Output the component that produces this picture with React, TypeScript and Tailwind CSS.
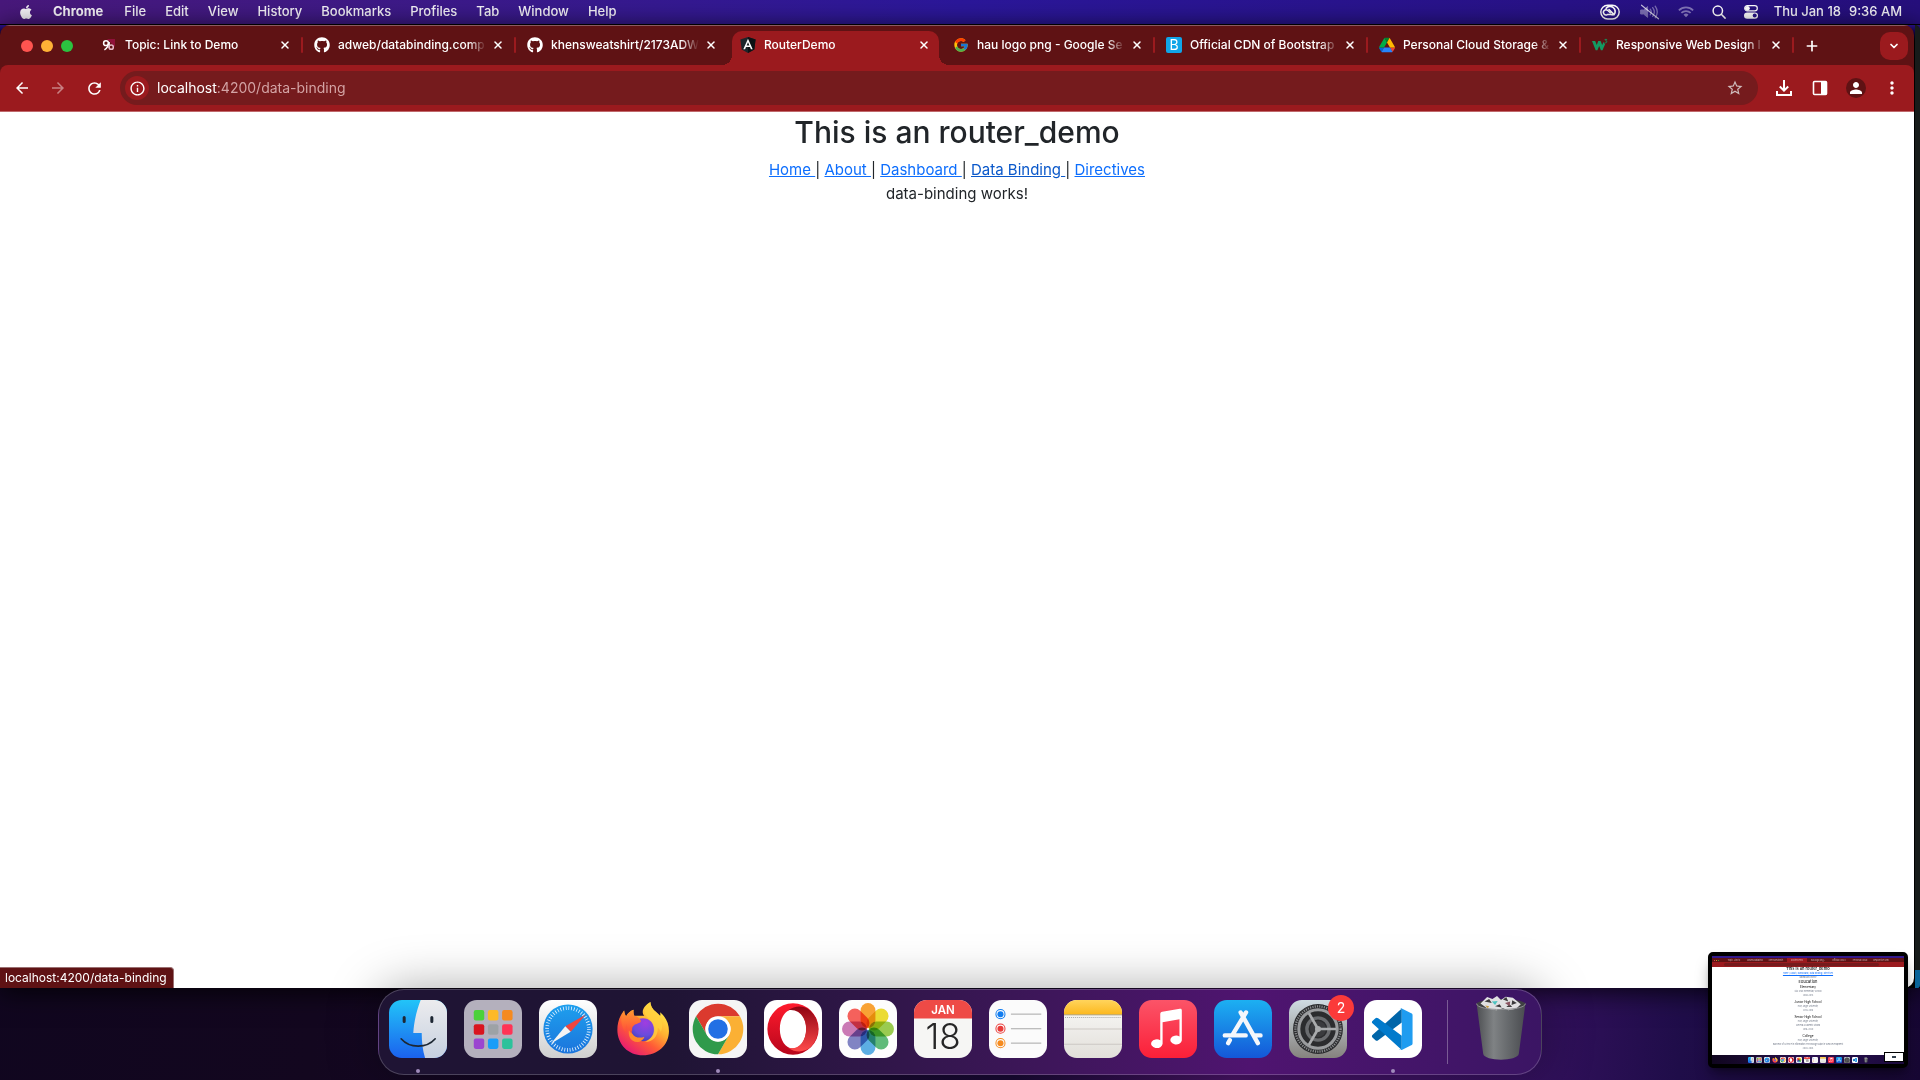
import type { ReactNode } from "react";
import { ChevronDown, Plus, X } from "lucide-react";
import { FaApple, FaGithub } from "react-icons/fa";
import { FcGoogle } from "react-icons/fc";
import {
  MdArrowBack,
  MdArrowForward,
  MdInfoOutline,
  MdMoreVert,
  MdPerson,
  MdRefresh,
  MdStarBorder,
} from "react-icons/md";

/* ---------- menu bar ---------- */

const menus = ["File", "Edit", "View", "History", "Bookmarks", "Profiles", "Tab", "Window", "Help"];

function CreativeCloudIcon() {
  return (
    <svg viewBox="0 0 20 16" className="h-4 w-5" fill="none" stroke="#fff">
      <rect x="0.8" y="1.2" width="18.4" height="13.8" rx="6.9" strokeWidth="1.4" />
      <path d="M10.3 8.8 7.6 6.3a2.6 2.6 0 1 0-.2 4.3h4.8" strokeWidth="1.5" strokeLinecap="round" />
      <path d="M6.2 4.3a4.8 4.8 0 0 1 6.8-.9 4.8 4.8 0 0 1 1 7.2h-2" strokeWidth="1.7" strokeLinecap="round" />
      <path d="m9 5.5 4.6 4.6" strokeWidth="1.6" strokeLinecap="round" />
    </svg>
  );
}

function MutedIcon() {
  return (
    <svg viewBox="0 0 20 16" className="h-4 w-5" fill="none" stroke="#fff" strokeLinecap="round">
      <g opacity="0.4">
        <path d="M1 6h2.6L7.6 2.6v10.8L3.6 10H1z" fill="#fff" />
        <path d="M10.2 5.2a4.6 4.6 0 0 1 0 5.6M12.7 3.6a7.4 7.4 0 0 1 0 8.8M15.2 2.2a10 10 0 0 1 0 11.6" strokeWidth="1.3" />
      </g>
      <path d="M1.5 1.2 18.5 14.8" strokeWidth="1.1" opacity="0.75" />
    </svg>
  );
}

function WifiIcon() {
  return (
    <svg viewBox="0 0 18 14" className="h-4 w-4" fill="none" stroke="#fff" strokeWidth="2" opacity="0.4">
      <path d="M1 5.2a11.4 11.4 0 0 1 16 0M3.8 8a7.5 7.5 0 0 1 10.4 0" />
      <path d="M6.2 10.2a4 4 0 0 1 5.6 0L9 13z" fill="#fff" stroke="none" />
    </svg>
  );
}

function SearchIcon() {
  return (
    <svg viewBox="0 0 14 14" className="size-[14px]" fill="none" stroke="#fff" strokeWidth="1.5" strokeLinecap="round">
      <circle cx="5.8" cy="5.8" r="4.7" />
      <path d="m9.3 9.3 3.8 3.8" />
    </svg>
  );
}

function ControlCenterIcon() {
  return (
    <svg viewBox="0 0 14 14" className="size-[14px]">
      <rect x="0.7" y="0.7" width="12.6" height="5.2" rx="2.6" fill="none" stroke="#fff" strokeWidth="1.2" />
      <circle cx="3.4" cy="3.3" r="2.4" fill="#fff" />
      <rect x="0" y="7.4" width="14" height="6.4" rx="3.2" fill="#fff" />
      <circle cx="10.7" cy="10.6" r="2" fill="#281487" />
    </svg>
  );
}

function MenuBar() {
  return (
    <header className="flex h-6 shrink-0 items-center bg-linear-to-r from-[#48187b] via-[#2b179a] to-[#260f7c] pr-[18px] pl-[18px] text-[13px] font-medium text-white/95">
      <button aria-label="Apple menu" className="w-[35px] shrink-0">
        <FaApple className="size-4" />
      </button>
      <nav className="flex gap-[19px]">
        <button className="mr-0.5 font-bold">Chrome</button>
        {menus.map((m) => (
          <button key={m}>{m}</button>
        ))}
      </nav>
      <div className="ml-auto flex items-center">
        <button aria-label="Creative Cloud" className="mr-5"><CreativeCloudIcon /></button>
        <button aria-label="Sound muted" className="mr-[18px]"><MutedIcon /></button>
        <button aria-label="Wi-Fi" className="mr-[18px]"><WifiIcon /></button>
        <button aria-label="Spotlight" className="mr-[18px]"><SearchIcon /></button>
        <button aria-label="Control Center" className="mr-4"><ControlCenterIcon /></button>
        <time className="flex gap-2"><span>Thu Jan 18</span><span>9:36 AM</span></time>
      </div>
    </header>
  );
}

/* ---------- favicons ---------- */

function LinkedRingsIcon() {
  return (
    <svg viewBox="0 0 16 16" className="size-4" fill="none">
      <path d="M6 2h8v8z" fill="#8f1139" />
      <circle cx="5" cy="6.2" r="2.4" stroke="#fff" strokeWidth="1.5" />
      <path d="M7.4 6.2c0 3-1.4 5-4 6.6" stroke="#fff" strokeWidth="1.5" />
      <path d="M8.2 5v6" stroke="#fff" strokeWidth="1.4" />
      <circle cx="10.2" cy="10.2" r="2.1" stroke="#e7b9c8" strokeWidth="1.5" />
    </svg>
  );
}

function AngularIcon() {
  return (
    <svg viewBox="0 0 16 16" className="size-4">
      <path d="M8 0 15.6 2.6 14.3 12.4 8 16 1.7 12.4.4 2.6z" fill="#1c262b" />
      <path d="M8 0 15.6 2.6 14.3 12.4 8 16z" fill="#0d1214" />
      <path d="M8 1.8 3.3 12.2h1.8l.9-2.3h4l.9 2.3h1.8zM8 5.2l1.4 3.3H6.6z" fill="#fff" fillRule="evenodd" />
    </svg>
  );
}

function BootstrapCdnIcon() {
  return (
    <span className="grid size-4 place-items-center rounded-[2px] bg-[#10a5e8] text-sm leading-none font-normal text-white">B</span>
  );
}

function DriveIcon() {
  return (
    <svg viewBox="0 0 87.3 78" className="size-4">
      <path d="m6.6 66.85 3.85 6.65c.8 1.4 1.95 2.5 3.3 3.3L27.5 53H0c0 1.55.4 3.1 1.2 4.5z" fill="#0066da" />
      <path d="M43.65 25 29.9 1.2c-1.35.8-2.5 1.9-3.3 3.3l-25.4 44A9.06 9.06 0 0 0 0 53h27.5z" fill="#00ac47" />
      <path d="M73.55 76.8c1.35-.8 2.5-1.9 3.3-3.3l1.6-2.75L86.1 57.5c.8-1.4 1.2-2.95 1.2-4.5H59.8l5.85 11.5z" fill="#ea4335" />
      <path d="M43.65 25 57.4 1.2C56.05.4 54.5 0 52.9 0H34.4c-1.6 0-3.15.45-4.5 1.2z" fill="#00832d" />
      <path d="M59.8 53H27.5L13.75 76.8c1.35.8 2.9 1.2 4.5 1.2h50.8c1.6 0 3.15-.45 4.5-1.2z" fill="#2684fc" />
      <path d="m73.4 26.5-12.7-22c-.8-1.4-1.95-2.5-3.3-3.3L43.65 25 59.8 53h27.45c0-1.55-.4-3.1-1.2-4.5z" fill="#ffba00" />
    </svg>
  );
}

function W3Icon() {
  return (
    <svg viewBox="0 0 16 16" className="size-4">
      <path d="M0 4h3.2l1.6 4L6.2 4h2.4l1.6 4 1.3-3 1.6 2.2-2.6 6H8.9L7.2 9l-1.8 4.2H3.7z" fill="#149a62" />
      <path d="M12.6 2.4h2.2l-1.1 1.5c1.8 0 1.6 2.3-1 1.9" fill="none" stroke="#149a62" strokeWidth="0.9" />
    </svg>
  );
}

/* ---------- browser ---------- */

type TabData = { title: string; icon: ReactNode; active?: boolean; divider?: boolean };

const tabs: TabData[] = [
  { title: "Topic: Link to Demo", icon: <LinkedRingsIcon />, divider: true },
  { title: "adweb/databinding.comp", icon: <FaGithub className="size-4" />, divider: true },
  { title: "khensweatshirt/2173ADW", icon: <FaGithub className="size-4" /> },
  { title: "RouterDemo", icon: <AngularIcon />, active: true },
  { title: "hau logo png - Google Se", icon: <FcGoogle className="size-4" />, divider: true },
  { title: "Official CDN of Bootstrap", icon: <BootstrapCdnIcon />, divider: true },
  { title: "Personal Cloud Storage &", icon: <DriveIcon />, divider: true },
  { title: "Responsive Web Design I", icon: <W3Icon />, divider: true },
];

function Tab({ tab }: { tab: TabData }) {
  return (
    <div
      role="tab"
      aria-selected={!!tab.active}
      className="relative flex h-[39px] w-[213px] min-w-0 shrink items-center pr-2.5 pb-px pl-[11px]"
    >
      {tab.active && (
        <>
          <div className="absolute inset-x-[3px] top-[5px] bottom-0 rounded-t-[10px] bg-[#9b1a1e]" />
          <div className="absolute bottom-0 -left-[7px] size-2.5 bg-[radial-gradient(circle_at_0_0,transparent_10px,#9b1a1e_10px)]" />
          <div className="absolute -right-[7px] bottom-0 size-2.5 bg-[radial-gradient(circle_at_100%_0,transparent_10px,#9b1a1e_10px)]" />
        </>
      )}
      {tab.divider && <div className="absolute right-0 h-4 w-0.5 rounded-full bg-[#9b1a1e]" />}
      <span className="relative size-4 shrink-0">{tab.icon}</span>
      <span className="relative ml-2 min-w-0 flex-1 overflow-hidden mask-r-from-88% text-xs font-medium whitespace-nowrap">
        {tab.title}
      </span>
      <button aria-label={`Close ${tab.title}`} className="relative ml-1 grid size-4 place-items-center">
        <X className="size-3" strokeWidth={3} />
      </button>
    </div>
  );
}

function TabStrip() {
  return (
    <div className="flex h-10 shrink-0 items-center border-t border-[#8a5a60] bg-[#5f1214] pr-1.5 pl-[21px] text-white">
      <div className="flex w-[69px] shrink-0 gap-2">
        <button aria-label="Close window" className="size-3 rounded-full bg-[#ff5450]" />
        <button aria-label="Minimize window" className="size-3 rounded-full bg-[#ffb136]" />
        <button aria-label="Zoom window" className="size-3 rounded-full bg-[#2cc140]" />
      </div>
      <div role="tablist" className="flex min-w-0">
        {tabs.map((t) => (
          <Tab key={t.title} tab={t} />
        ))}
      </div>
      <button aria-label="New tab" className="ml-2.5 grid size-4 shrink-0 place-items-center">
        <Plus className="size-4" strokeWidth={2.5} />
      </button>
      <button aria-label="Search tabs" className="ml-auto grid size-7 shrink-0 place-items-center rounded-[10px] bg-[#9b1a1e]">
        <ChevronDown className="size-3" strokeWidth={3.5} />
      </button>
    </div>
  );
}

const toolButton = "grid size-9 shrink-0 place-items-center";

function Toolbar() {
  return (
    <div className="shrink-0 bg-[#5f1214]">
      <div className="flex h-[47px] items-center rounded-t-lg border-b border-[#c0696c] bg-[#9b1a1e] px-1 text-white">
        <button aria-label="Back" className={toolButton}><MdArrowBack className="size-[18px]" /></button>
        <button aria-label="Forward" className={toolButton}><MdArrowForward className="size-[18px] opacity-45" /></button>
        <button aria-label="Reload" className={toolButton}><MdRefresh className="size-[19px]" /></button>
        <div className="mx-2 flex h-[34px] min-w-0 flex-1 items-center rounded-full bg-[#751b1d] pr-3.5 pl-[5px]">
          <button aria-label="Site information" className="grid size-6 shrink-0 place-items-center rounded-full bg-[#9b1a1e]">
            <MdInfoOutline className="size-[17px]" />
          </button>
          <div className="relative ml-2 flex-1 text-sm">
            <span aria-hidden="true" className="pointer-events-none absolute inset-y-0 left-0">
              <span>localhost</span>
              <span className="text-[#d3a3a4]">:4200/data-binding</span>
            </span>
            <input
              aria-label="Address and search bar"
              defaultValue="localhost:4200/data-binding"
              className="block w-full bg-transparent text-transparent outline-none"
            />
          </div>
          <button aria-label="Bookmark this tab"><MdStarBorder className="size-[18px] text-[#cfbcbc]" /></button>
        </div>
        <button aria-label="Downloads" className={toolButton}>
          <svg viewBox="0 0 16 16" className="size-4" fill="none" stroke="#fff" strokeWidth="2">
            <path d="M8 0v10.5M3.8 6.5 8 10.7l4.2-4.2M1 11v4h14v-4" />
          </svg>
        </button>
        <button aria-label="Side panel" className={toolButton}>
          <svg viewBox="0 0 16 16" className="size-4">
            <rect x="1.5" y="1.5" width="13" height="13" rx="1" fill="none" stroke="#fff" strokeWidth="1.6" />
            <path d="M9 1.5h5.5v13H9z" fill="#fff" />
          </svg>
        </button>
        <button aria-label="Profile" className={toolButton}>
          <span className="grid size-5 place-items-center rounded-full bg-[#5f1214]"><MdPerson className="size-[18px]" /></span>
        </button>
        <button aria-label="Customize and control" className={toolButton}><MdMoreVert className="size-5" /></button>
      </div>
    </div>
  );
}

const links = ["Home", "About", "Dashboard", "Data Binding", "Directives"];

function Page() {
  return (
    <main className="relative flex-1 bg-white text-center text-[#212529]">
      <h2 className="mb-1.5 text-[30px] leading-10 font-medium">This is an router_demo</h2>
      <nav className="text-[15px] leading-6">
        {links.map((l, i) => (
          <span key={l}>
            <a
              href="#"
              className={
                l === "Data Binding"
                  ? "whitespace-pre text-[#0a58ca] underline"
                  : "whitespace-pre text-[#0d6efd] underline"
              }
            >
              {i < links.length - 1 ? l + " " : l}
            </a>
            {i < links.length - 1 && "| "}
          </span>
        ))}
      </nav>
      <p className="text-[15px] leading-6">data-binding works!</p>
      <div className="absolute bottom-0 left-0 h-[21px] rounded-tr-[4px] border-t border-r border-[#9a7072] bg-[#5f1214] pr-1.5 pl-[5px] text-xs leading-5 text-white">
        localhost:4200/data-binding
      </div>
    </main>
  );
}

/* ---------- dock icons, all on a 172-unit square ---------- */

function Tile({ fill, children }: { fill: string; children?: ReactNode }) {
  return (
    <svg viewBox="0 0 172 172" className="block size-full overflow-visible">
      <rect width="172" height="172" rx="38" fill={fill} />
      {children}
    </svg>
  );
}

function Grad({ id, a, b, x2 = 0, y2 = 1 }: { id: string; a: string; b: string; x2?: number; y2?: number }) {
  return (
    <linearGradient id={id} x1="0" y1="0" x2={x2} y2={y2}>
      <stop stopColor={a} />
      <stop offset="1" stopColor={b} />
    </linearGradient>
  );
}

function Finder() {
  return (
    <Tile fill="url(#finderBlue)">
      <defs>
        <Grad id="finderBlue" a="#22c4f8" b="#1b62ee" />
        <Grad id="finderPale" a="#ececee" b="#c6d0e0" />
        <clipPath id="finderClip"><rect width="172" height="172" rx="38" /></clipPath>
      </defs>
      <path clipPath="url(#finderClip)" d="M94 0C82 30 74 65 72 98h25c0 27 3 52 10 74h65V0z" fill="url(#finderPale)" />
      <path d="M45 52v12M127 52v12" stroke="#1d2733" strokeWidth="9" strokeLinecap="round" />
      <path d="M36 115c25 29 76 29 101 0" fill="none" stroke="#1d2733" strokeWidth="5" strokeLinecap="round" />
    </Tile>
  );
}

const launchpadColors = ["#4bd13a", "#fdb927", "#f58a1f", "#d9141e", "#9da2a6", "#ff3355", "#9b45d0", "#1a9df8", "#2bc29b"];

function Launchpad() {
  return (
    <Tile fill="#b4b0bd">
      {launchpadColors.map((c, i) => (
        <rect key={c} x={29 + (i % 3) * 42} y={30 + Math.floor(i / 3) * 42} width="31" height="31" rx="6" fill={c} />
      ))}
    </Tile>
  );
}

function Safari() {
  return (
    <Tile fill="url(#safariTile)">
      <defs>
        <Grad id="safariTile" a="#ffffff" b="#cfcfcf" />
        <Grad id="safariDial" a="#1ea0ee" b="#1b74dc" />
      </defs>
      <circle cx="86" cy="86" r="73" fill="url(#safariDial)" />
      <circle cx="86" cy="86" r="62" fill="none" stroke="#e8f4ff" strokeWidth="11" strokeDasharray="2.4 5.7" />
      <path d="M139 43 78 78l16 16z" fill="#ee4540" />
      <path d="m35 130 43-52 16 16z" fill="#f4f4f4" />
    </Tile>
  );
}

function Firefox() {
  return (
    <svg viewBox="0 0 172 172" className="block size-full">
      <defs>
        <linearGradient id="foxBody" x1="0.85" y1="0.1" x2="0.2" y2="1">
          <stop stopColor="#fff04a" />
          <stop offset="0.35" stopColor="#ffb031" />
          <stop offset="0.62" stopColor="#ff5b36" />
          <stop offset="1" stopColor="#e3117c" />
        </linearGradient>
        <radialGradient id="foxGlobe" cx="0.6" cy="0.2" r="0.9">
          <stop stopColor="#a03de0" />
          <stop offset="0.6" stopColor="#6a4bdc" />
          <stop offset="1" stopColor="#3b3fae" />
        </radialGradient>
        <Grad id="foxHead" a="#ff9a2e" b="#ff4a3a" />
      </defs>
      <path
        d="M108 6c1 14 6 20 16 29 6 6 10 8 13 12 1-5 0-8 0-11 17 15 26 34 26 56 0 42-34 72-77 72-44 0-76-33-76-76 0-23 8-43 20-57 1 9 3 14 6 17 5-9 13-16 22-19-1 8 0 14 2 18h30c-12-12 0-32 18-41z"
        fill="url(#foxBody)"
      />
      <circle cx="86" cy="88" r="34" fill="url(#foxGlobe)" />
      <path d="M30 31c1 9 3 14 6 17 5-9 13-16 22-19-1 8 0 14 2 18 8 1 16 6 20 15 0 5-12 8-18 11-8 6-9 10-8 20-9-5-15-13-16-24-4 9-5 19-2 29-16-18-19-46-6-67z" fill="url(#foxHead)" />
      <path d="M108 6c1 14 6 20 16 29 18 16 24 38 15 60-2-7-5-10-9-13 0 27-15 42-38 42 20-10 28-23 26-42-3-20-18-26-26-40-3-13 3-27 16-36z" fill="#ffd23f" opacity="0.75" />
      <path d="M54 100c8 12 23 14 36 9-4 14-21 20-34 12-11-7-13-18-12-31 3 4 6 8 10 10z" fill="#ff8a2c" />
    </svg>
  );
}

const chromeSector = "M151 48.5H86a37.5 37.5 0 0 0-32.5 56.25L21 48.5a75 75 0 0 1 130 0z";

function ChromeIcon() {
  return (
    <Tile fill="#f5f5f5">
      <path d={chromeSector} fill="#db3a2e" />
      <path d={chromeSector} fill="#fbb034" transform="rotate(120 86 86)" />
      <path d={chromeSector} fill="#2f9a4b" transform="rotate(240 86 86)" />
      <circle cx="86" cy="86" r="37" fill="#fff" />
      <circle cx="86" cy="86" r="29" fill="#2270e4" />
    </Tile>
  );
}

function Opera() {
  return (
    <Tile fill="#fff">
      <defs>
        <Grad id="operaRing" a="#ff1b2d" b="#b8061c" />
        <Grad id="operaSide" a="#8f0312" b="#ff4b4b" />
      </defs>
      <path d="M86 10a76 76 0 1 0 0 152 76 76 0 0 0 0-152zm0 18c22 0 39 25 39 58s-17 58-39 58-39-25-39-58 17-58 39-58z" fill="url(#operaRing)" fillRule="evenodd" />
      <path d="M70 31c26-17 50-14 67 0a76 76 0 0 1 0 110c-17 14-43 16-65 1 28 8 53-18 53-56S99 24 70 31z" fill="url(#operaSide)" />
    </Tile>
  );
}

const petals = ["#f8981d", "#e9d71c", "#8fc63d", "#4fb36b", "#4aa5e0", "#7377bd", "#c56bad", "#f4504a"];

function Photos() {
  return (
    <Tile fill="#fdfdfd">
      <g className="isolate">
        {petals.map((c, i) => (
          <rect
            key={c}
            x="64"
            y="9"
            width="44"
            height="74"
            rx="22"
            fill={c}
            opacity="0.9"
            className="mix-blend-multiply"
            transform={`rotate(${i * 45} 86 86)`}
          />
        ))}
      </g>
    </Tile>
  );
}

function CalendarIcon() {
  return (
    <Tile fill="#f6f6f4">
      <path d="M0 55V38A38 38 0 0 1 38 0h96a38 38 0 0 1 38 38v17z" fill="#ee4a46" />
      <text x="86" y="42" textAnchor="middle" fontSize="34" fontWeight="600" fill="#fff">JAN</text>
      <text x="86" y="145" textAnchor="middle" fontSize="104" fontWeight="300" fill="#262626">18</text>
    </Tile>
  );
}

function Reminders() {
  return (
    <Tile fill="#fbfbfb">
      {["#127df0", "#ea3c39", "#f68b1f"].map((c, i) => (
        <g key={c} transform={`translate(0 ${i * 43})`}>
          <circle cx="34" cy="42" r="13.5" fill="none" stroke={c} strokeWidth="3" />
          <circle cx="34" cy="42" r="9" fill={c} />
          <path d="M65 42h90" stroke="#bdbdbd" strokeWidth="4" />
        </g>
      ))}
    </Tile>
  );
}

function Notes() {
  return (
    <Tile fill="url(#notesPaper)">
      <defs>
        <Grad id="notesPaper" a="#fafaf8" b="#e2dfda" />
        <Grad id="notesTop" a="#ffd45c" b="#fcb81e" />
      </defs>
      <path d="M0 43v-5A38 38 0 0 1 38 0h96a38 38 0 0 1 38 38v5z" fill="url(#notesTop)" />
      <path d="M0 44h172" stroke="#8f7a45" strokeWidth="2" />
      <path d="M3 52h166" stroke="#aaa" strokeWidth="3" strokeDasharray="3 3" />
      <path d="M0 86h172M0 131h172" stroke="#cbc8c4" strokeWidth="3" />
    </Tile>
  );
}

function Music() {
  return (
    <Tile fill="url(#musicTile)">
      <defs><Grad id="musicTile" a="#fb5468" b="#fb1f38" /></defs>
      <path d="M63 42c0-4 2-6 6-7l52-9c4-1 6 1 6 5v89a17 13 0 1 1-7-12V57l-50 9v64a17 13 0 1 1-7-11z" fill="#fff" />
    </Tile>
  );
}

function AppStore() {
  return (
    <Tile fill="url(#storeTile)">
      <defs><Grad id="storeTile" a="#1cb0f2" b="#1457d8" /></defs>
      <g stroke="#f4f7fb" strokeWidth="13" strokeLinecap="round">
        <path d="M95 37 57 100M47 119l-5 9M79 37l51 91M32 105h62M118 105h20" />
      </g>
    </Tile>
  );
}

function Settings() {
  return (
    <Tile fill="url(#settingsTile)">
      <defs><Grad id="settingsTile" a="#cfdbe2" b="#85827e" /></defs>
      <circle cx="86" cy="86" r="74" fill="#2b2c2e" />
      <circle cx="86" cy="86" r="67" fill="none" stroke="#8b8d8f" strokeWidth="7" strokeDasharray="3.4 3.5" />
      <circle cx="86" cy="86" r="57" fill="none" stroke="#9a9c9e" strokeWidth="9" />
      <circle cx="86" cy="86" r="33" fill="none" stroke="#6a6c6f" strokeWidth="10" />
      <circle cx="86" cy="86" r="24" fill="#3a3b3e" />
      <path d="M86 86h54M86 86 59 39M86 86l-27 47" stroke="#a9abad" strokeWidth="8" />
      <circle cx="86" cy="86" r="9" fill="#a9abad" />
    </Tile>
  );
}

function VSCode() {
  return (
    <Tile fill="#fff">
      <path d="M112 25v42L42 119c-3 2-6 2-8 0l-9-8c-2-2-2-5 0-7z" fill="#0065a9" />
      <path d="M112 148v-42L42 54c-3-2-6-2-8 0l-9 8c-2 2-2 5 0 7z" fill="#007acc" />
      <path d="m112 25 28 14c3 1 4 3 4 6v83c0 3-1 5-4 6l-28 14c-3 1-6 1-8-2 4 3 8 1 8-4V30c0-5-4-7-8-4 2-2 5-3 8-1z" fill="#1f9cf0" />
    </Tile>
  );
}

function Trash() {
  return (
    <svg viewBox="0 0 156 200" className="block size-full">
      <defs>
        <linearGradient id="trashBody">
          <stop stopColor="#4d4f52" />
          <stop offset="0.35" stopColor="#7f8284" />
          <stop offset="0.7" stopColor="#626568" />
          <stop offset="1" stopColor="#4a4c50" />
        </linearGradient>
      </defs>
      <ellipse cx="78" cy="28" rx="74" ry="16" fill="#3f4043" />
      <path d="M4 26c0 24 148 24 148 0l-20 152c-3 24-105 24-108 0z" fill="url(#trashBody)" />
      <path d="m16 26 20-20 16 6 14-9 12 12 14-10 22 3 24 20-14 14-24 4-16-6-20 6-26-4z" fill="#e0e0e2" />
      <path d="m28 20 14-8 8 12zM84 14l10-8 6 14zM112 16l14 8-16 6zM60 34l14-6 6 10zM94 36l10-8 8 8z" fill="#3b3a3c" />
      <path d="m50 20 18-2-8 12z" fill="#4cc4c0" />
      <path d="m90 24 16-4-2 14z" fill="#8a5360" />
      <path d="m30 32 12 2-4 6z" fill="#c69a3d" />
      <path d="M4 26c0 24 148 24 148 0" fill="none" stroke="#8f9193" strokeWidth="3" />
    </svg>
  );
}

const apps: { name: string; Icon: () => ReactNode; running?: boolean; badge?: string }[] = [
  { name: "Finder", Icon: Finder, running: true },
  { name: "Launchpad", Icon: Launchpad },
  { name: "Safari", Icon: Safari },
  { name: "Firefox", Icon: Firefox },
  { name: "Google Chrome", Icon: ChromeIcon, running: true },
  { name: "Opera", Icon: Opera },
  { name: "Photos", Icon: Photos },
  { name: "Calendar", Icon: CalendarIcon },
  { name: "Reminders", Icon: Reminders },
  { name: "Notes", Icon: Notes },
  { name: "Music", Icon: Music },
  { name: "App Store", Icon: AppStore },
  { name: "System Preferences", Icon: Settings, badge: "2" },
  { name: "Visual Studio Code", Icon: VSCode, running: true },
];

function Dock() {
  return (
    <footer className="relative flex h-[92px] shrink-0 justify-center">
      <div className="relative mt-px flex h-[86px] gap-[17px] rounded-[26px] border border-white/20 bg-linear-to-r from-[#1f1434] from-25% via-[#4f1470] via-75% to-[#3b1564] px-2.5 pt-2.5 shadow-[0_0_50px_rgba(0,0,0,0.35)]">
        {apps.map(({ name, Icon, running, badge }) => (
          <button key={name} aria-label={name} className="relative flex w-[58px] flex-col items-center">
            <span className="block size-[58px]"><Icon /></span>
            {running && <span className="mt-[11px] size-1 rounded-full bg-[#a08bbb]" />}
            {badge && (
              <span className="absolute -top-[5px] -right-[7px] grid size-[26px] place-items-center rounded-full bg-[#fb3a3a] text-sm text-white">
                {badge}
              </span>
            )}
          </button>
        ))}
        <div className="ml-2 h-16 w-px bg-white/30" />
        <button aria-label="Trash" className="-mt-[5px] mr-1 ml-2.5 h-[66px] w-[52px]"><Trash /></button>
      </div>
    </footer>
  );
}

/* ---------- floating capture thumbnail ---------- */

function Thumbnail() {
  return (
    <aside
      aria-label="Screen capture"
      className="absolute right-3 bottom-3 flex h-[116px] w-[200px] flex-col rounded-[5px] border-4 border-black bg-white text-center text-[#212529] shadow-lg shadow-black/40"
    >
      <div className="h-0.5 bg-[#33188c]" />
      <div className="flex h-1 items-center gap-px bg-[#5f1214] px-0.5 text-[2px] leading-none text-white/60">
        <span className="size-px rounded-full bg-[#ff5450]" />
        <span className="size-px rounded-full bg-[#ffb136]" />
        <span className="mr-1 size-px rounded-full bg-[#2cc140]" />
        {tabs.map((t) => (
          <span
            key={t.title}
            className={t.active ? "h-full w-5 bg-[#9b1a1e] pt-px whitespace-nowrap" : "h-full w-5 pt-px whitespace-nowrap"}
          >
            {t.title.slice(0, 14)}
          </span>
        ))}
      </div>
      <div className="h-[5px] bg-[#9b1a1e] p-px pl-3"><div className="h-[3px] w-[155px] rounded-full bg-[#751b1d]" /></div>
      <div className="flex-1 text-[2px] leading-[4px] text-gray-500">
        <p className="text-[4px] font-medium text-black">This is an router_demo</p>
        <p className="text-[#0d6efd] underline">Home | About | Dashboard | Data Binding | Directives</p>
        <p>dashboard works!</p>
        <p className="text-[4px] leading-[6px] text-black">Education</p>
        <p className="text-[3px] text-black">Elementary</p>
        <p>Sta. Cruz Elementary School</p>
        <p>2008-2014</p>
        <p className="mt-[3px] text-[3px] text-black">Junior High School</p>
        <p>Holy Angel University</p>
        <p>2014-2018</p>
        <p className="mt-[3px] text-[3px] text-black">Senior High School</p>
        <p>Holy Angel University</p>
        <p>General Academic Strand</p>
        <p>2018-2020</p>
        <p className="mt-[3px] text-[3px] text-black">College</p>
        <p>Holy Angel University</p>
        <p>Bachelor of Science in Information Technology Major in Web Development</p>
        <p>2020-2024</p>
      </div>
      <div className="flex h-[9px] items-center justify-center gap-0.5 bg-linear-to-r from-[#10061f] via-[#2a1150] to-[#1b0a3c]">
        {apps.map(({ name, Icon }) => (
          <span key={name} className="block size-1.5"><Icon /></span>
        ))}
        <span className="ml-1 block h-1.5 w-1"><Trash /></span>
      </div>
      <div className="absolute right-0 bottom-0.5 grid h-2.5 w-5 place-items-center border border-black bg-white">
        <span className="block h-0.5 w-1 bg-[#33404d]" />
      </div>
    </aside>
  );
}

export default function App() {
  return (
    <div className="relative flex h-screen min-h-[480px] flex-col overflow-hidden bg-linear-[95deg,#10061f_0%,#13071f_20%,#190a35_55%,#481466_66%,#35115f_80%,#1f0d49_88%,#170733_100%] font-['Inter',sans-serif]">
      <MenuBar />
      <div className="flex min-h-0 flex-1 border-t border-black bg-linear-to-b from-[#260f7c] to-black to-2% shadow-[0_4px_24px_rgba(0,0,0,0.8)]">
        <div className="flex min-w-0 flex-1 flex-col overflow-hidden rounded-t-[10px] rounded-br-[10px]">
          <TabStrip />
          <Toolbar />
          <Page />
        </div>
        <div className="ml-px flex w-[5px] shrink-0 flex-col justify-end overflow-hidden rounded-tr-[6px] rounded-br-[4px] bg-[#171b1a]">
          <div className="h-[18px] bg-[#0a659c]" />
        </div>
      </div>
      <Dock />
      <Thumbnail />
    </div>
  );
}
